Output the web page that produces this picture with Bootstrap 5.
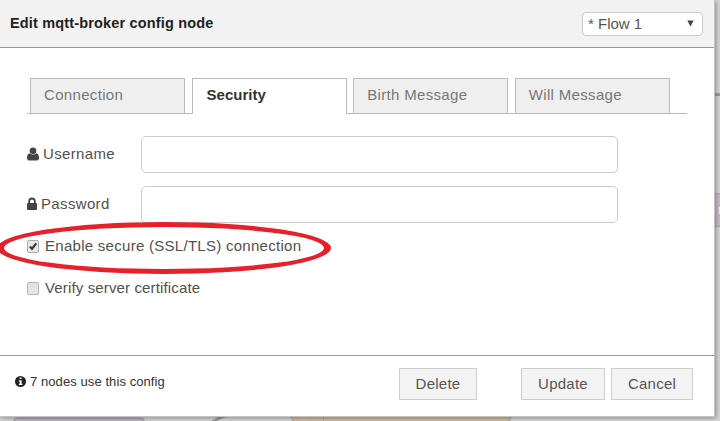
<!DOCTYPE html>
<html lang="en">
<head>
<meta charset="utf-8">
<meta name="viewport" content="width=device-width, initial-scale=1">
<title>Edit mqtt-broker config node</title>
<link href="https://cdn.jsdelivr.net/npm/bootstrap@5.3.0/dist/css/bootstrap.min.css" rel="stylesheet">
<style>
body{font-family:"Liberation Sans",Arial,sans-serif;font-size:15px;line-height:20px;color:#505050;background:#d3d3d3;width:720px;height:421px}
.canvas-bg{inset:0;width:720px;height:421px}
.dialog-box{width:715px;height:417px;background:#fff;border-right:1px solid #c4c4c4;border-bottom:1px solid #c4c4c4;box-shadow:1px 1px 4px rgba(0,0,0,.35)}
.dialog-head{height:48px;background:#f2f2f2;border-bottom:1px solid #999;padding:0 11px 0 10px}
.dialog-title{font-size:14.5px;font-weight:700;color:#222;letter-spacing:.16px;margin-top:-2px}
.flow-select{width:121px;height:24px;border:1px solid #c8c8c8;border-radius:4px;background:#fff;padding:0 8px 0 5px;color:#555;font-size:15px}
.dialog-main{height:307px;padding:30px 27px 0}
.config-tabs{height:36px;border-bottom:1px solid #bbb;padding-left:3px;gap:6.6px;flex-wrap:nowrap;margin-bottom:22px}
.config-tabs .nav-link{width:155px;height:35px;border:1px solid #bbb;border-bottom:0;border-radius:0;background:#efefef;color:#777;padding:6px 13px;line-height:20px;letter-spacing:.33px;text-align:left;white-space:nowrap;margin:0}
.config-tabs .nav-link.active{height:36px;background:#fff;color:#333;font-weight:700;letter-spacing:0;padding-left:14px;border-color:#bbb}
.field-row{height:37px;margin-bottom:13px}
.field-label{width:114px;gap:4px;letter-spacing:.35px;padding-bottom:2px}
.field-row .form-control{width:477px;height:37px;border:1px solid #ccc;border-radius:5px}
.check-row{height:20px;gap:6px;letter-spacing:.28px;margin-bottom:22px}
.check-second{letter-spacing:.14px}
.dialog-foot{height:61px;border-top:1px solid #999;padding:0 21px 5px 15px}
.use-count{font-size:13px;color:#333;gap:4px;letter-spacing:.08px;padding-bottom:4px}
.dialog-foot .btn{height:32px;border:1px solid #ccc;border-radius:1px;background:#f3f3f3;color:#555;font-size:15px;line-height:20px;padding:5px 0;letter-spacing:.25px}
.w-delete{width:78px;margin-right:44px}.w-update{width:84px;margin-right:6px}.w-cancel{width:82px}
.callout-ring{left:0;top:216px;width:340px;height:64px;pointer-events:none}
</style>
</head>
<body class="position-relative overflow-hidden">
<svg class="canvas-bg position-absolute" viewBox="0 0 720 421" aria-hidden="true">
<path d="M710 94.500H720" stroke="#999" stroke-width="3"/>
<path d="M700 193.500H725V226.500H700Z" fill="#c5b9c7" stroke="#aaa"/>
<path d="M719.500 207V214" stroke="#eee" stroke-width="1"/>
<rect x="13.500" y="418" width="131" height="20" rx="4" fill="#bbaebf" stroke="#999"/>
<path d="M211 423Q219 417 229 415" fill="none" stroke="#999" stroke-width="3"/>
<path d="M290 415 295 424H508L512 415Z" fill="#d2b899" stroke="#999"/>
<path d="M298 415Q304 420 310 415" fill="#ddd"/>
<path d="M323.500 415V421" stroke="#c4aa8d"/>
</svg>
<main class="dialog-box position-relative d-flex flex-column">
<header class="dialog-head d-flex align-items-center justify-content-between">
<span class="dialog-title">Edit mqtt-broker config node</span>
<div class="flow-select d-flex align-items-center justify-content-between" role="combobox" aria-expanded="false"><span>* Flow 1</span><svg width="7" height="7" viewBox="0 0 7 7"><path d="M.3.5h6.400L3.500 6.500Z" fill="#444"/></svg></div>
</header>
<section class="dialog-main">
<nav class="nav config-tabs">
<a class="nav-link" href="#">Connection</a>
<a class="nav-link active" href="#">Security</a>
<a class="nav-link" href="#">Birth Message</a>
<a class="nav-link" href="#">Will Message</a>
</nav>
<form>
<div class="field-row d-flex align-items-center">
<label class="field-label d-flex align-items-center" for="user"><svg width="12" height="14" viewBox="0 0 12 14"><path d="M2.900 6.300C.8 6.300 0 8.700 0 10.800 0 12.300.9 13.500 2 13.500h8c1.100 0 2-1.200 2-2.700 0-2.100-.8-4.500-2.900-4.500-.8.800-1.900 1.200-3.100 1.200s-2.300-.4-3.100-1.200Z" fill="#444"/><circle cx="6" cy="3.700" r="3.300" fill="#444"/></svg><span>Username</span></label>
<input class="form-control" id="user" type="text">
</div>
<div class="field-row d-flex align-items-center">
<label class="field-label d-flex align-items-center" for="pass"><svg width="10" height="14" viewBox="0 0 10 14"><path d="M2.200 6.500V4.300a2.800 2.800 0 0 1 5.600 0v2.200" fill="none" stroke="#444" stroke-width="1.800"/><rect y="6" width="10" height="7" rx=".8" fill="#444"/></svg><span>Password</span></label>
<input class="form-control" id="pass" type="text">
</div>
<div class="check-row d-flex align-items-center">
<svg width="12" height="13" viewBox="0 0 12 13" role="checkbox" aria-checked="true"><rect x=".5" y=".5" width="11" height="12" rx="1.500" fill="#e8e8e8" stroke="#aaa"/><path d="M2.900 6.600 5 8.900 9.200 3.400" fill="none" stroke="#333" stroke-width="2.200"/></svg>
<span>Enable secure (SSL/TLS) connection</span>
</div>
<div class="check-row check-second d-flex align-items-center">
<svg width="12" height="13" viewBox="0 0 12 13" role="checkbox" aria-checked="false"><rect x=".5" y=".5" width="11" height="12" rx="1.500" fill="#e4e4e4" stroke="#b4b4b4"/></svg>
<span>Verify server certificate</span>
</div>
</form>
</section>
<footer class="dialog-foot d-flex align-items-center">
<div class="use-count d-flex align-items-center me-auto"><svg width="11" height="11" viewBox="0 0 11 11"><circle cx="5.500" cy="5.500" r="5.500" fill="#222"/><path d="M4.600 1.600h2v1.500h-2ZM3.800 4.200h2.800v3.600h.8v1.300H3.800V7.800h.9V5.400h-.9Z" fill="#fff"/></svg><span>7 nodes use this config</span></div>
<button class="btn w-delete" type="button">Delete</button>
<button class="btn w-update" type="button">Update</button>
<button class="btn w-cancel" type="button">Cancel</button>
</footer>
</main>
<svg class="callout-ring position-absolute" viewBox="0 216 340 64" aria-hidden="true"><path fill="#e8202a" fill-rule="evenodd" d="M-3 248a167 26 0 1 1 334 0a167 26 0 1 1-334 0ZM4 248a160 21 0 1 0 320 0a160 21 0 1 0-320 0Z"/></svg>
<script src="https://cdn.jsdelivr.net/npm/bootstrap@5.3.0/dist/js/bootstrap.bundle.min.js"></script>
</body>
</html>
